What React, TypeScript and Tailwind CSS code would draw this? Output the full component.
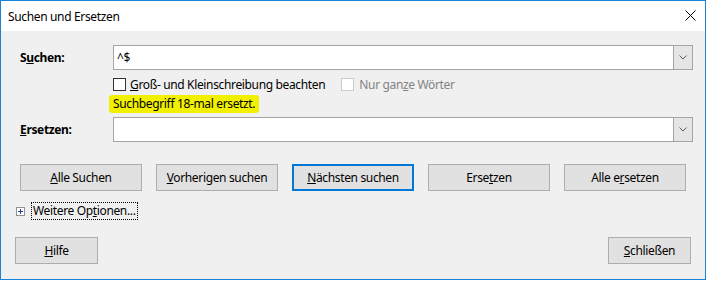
import React from "react";

const font = { fontFamily: '"Segoe UI", "Noto Sans", sans-serif' };

function Btn({ children, focused, w = "w-[122px]" }: { children: React.ReactNode; focused?: boolean; w?: string }) {
  return (
    <div
      className={`${w} h-[27px] flex items-center justify-center bg-[#e1e1e1] text-[12px] text-black ${
        focused ? "border-2 border-[#0078d7]" : "border border-[#adadad]"
      }`}
    >
      {children}
    </div>
  );
}

function Combo({ value }: { value?: string }) {
  return (
    <div className="w-[580px] h-[25px] flex bg-white border border-[#a5a5a5]">
      <div className="flex-1 flex items-center pl-[3px]">{value}</div>
      <div className="w-[19px] h-full flex items-center justify-center bg-[#e5e5e5] border-l border-[#a5a5a5]">
        <svg width="8" height="5" viewBox="0 0 8 5">
          <polyline points="0.5,0.5 4,4 7.5,0.5" fill="none" stroke="#5a5a5a" strokeWidth="1" />
        </svg>
      </div>
    </div>
  );
}

export default function App() {
  return (
    <div className="w-[707px] h-[281px] bg-white tracking-[-0.35px]" style={font}>
      <div className="w-[706px] h-[280px] flex flex-col border border-[#1883d7]">
        {/* title bar */}
        <div className="h-[30px] bg-white flex items-center justify-between pl-[7px] pr-[9px]">
          <span className="text-[12px] text-black mt-[1px]">Suchen und Ersetzen</span>
          <svg width="11" height="11" viewBox="0 0 11 11" className="mt-[-1px]">
            <path d="M0.5 0.5 L10.5 10.5 M10.5 0.5 L0.5 10.5" stroke="#000" strokeWidth="1" />
          </svg>
        </div>

        <div className="flex-1 bg-[#f0f0f0] flex flex-col text-[12px] text-black">
          {/* Suchen */}
          <div className="flex items-center mt-[14px] pl-[19px]">
            <span className="w-[93px] font-bold">
              S<u>u</u>chen:
            </span>
            <Combo value="^$" />
          </div>
          <div className="flex items-center ml-[112px] mt-[8px] h-[13px]">
            <div className="w-[13px] h-[13px] bg-white border border-[#333]" />
            <span className="ml-[4px]">
              <u>G</u>roß- und Kleinschreibung beachten
            </span>
            <div className="w-[13px] h-[13px] bg-white border border-[#cccccc] ml-[16px]" />
            <span className="ml-[5px] text-[#838383]">
              Nur gan<u>z</u>e Wörter
            </span>
          </div>
          <div className="ml-[108px] mt-[4px] h-[18px] flex items-center">
            <span className="bg-[#f0f000] px-[4px] leading-[18px] rounded-[3px]">Suchbegriff 18-mal ersetzt.</span>
          </div>

          {/* Ersetzen */}
          <div className="flex items-center mt-[4px] pl-[19px]">
            <span className="w-[93px] font-bold">
              <u>E</u>rsetzen:
            </span>
            <Combo />
          </div>

          {/* buttons */}
          <div className="flex gap-[14px] pl-[19px] mt-[22px]">
            <Btn>
              <span>
                <u>A</u>lle Suchen
              </span>
            </Btn>
            <Btn>
              <span>
                <u>V</u>orherigen suchen
              </span>
            </Btn>
            <Btn focused>
              <span>
                <u>N</u>ächsten suchen
              </span>
            </Btn>
            <Btn>
              <span>
                Erse<u>t</u>zen
              </span>
            </Btn>
            <Btn>
              <span>
                Alle e<u>r</u>setzen
              </span>
            </Btn>
          </div>

          {/* more options */}
          <div className="flex items-center pl-[15px] mt-[11px] h-[18px]">
            <div className="w-[9px] h-[9px] border border-[#919191] bg-white flex items-center justify-center">
              <svg width="7" height="7" viewBox="0 0 7 7">
                <path d="M1 3.5 H6 M3.5 1 V6" stroke="#1f3d99" strokeWidth="1" />
              </svg>
            </div>
            <span className="ml-[6px] border border-dotted border-black px-[1px] leading-[16px]">
              Weitere Op<u>t</u>ionen...
            </span>
          </div>

          {/* bottom */}
          <div className="flex justify-between pl-[14px] pr-[14px] mt-[17px]">
            <Btn w="w-[83px]">
              <span>
                <u>H</u>ilfe
              </span>
            </Btn>
            <Btn w="w-[83px]">
              <span>
                <u>S</u>chließen
              </span>
            </Btn>
          </div>
        </div>
      </div>
    </div>
  );
}
